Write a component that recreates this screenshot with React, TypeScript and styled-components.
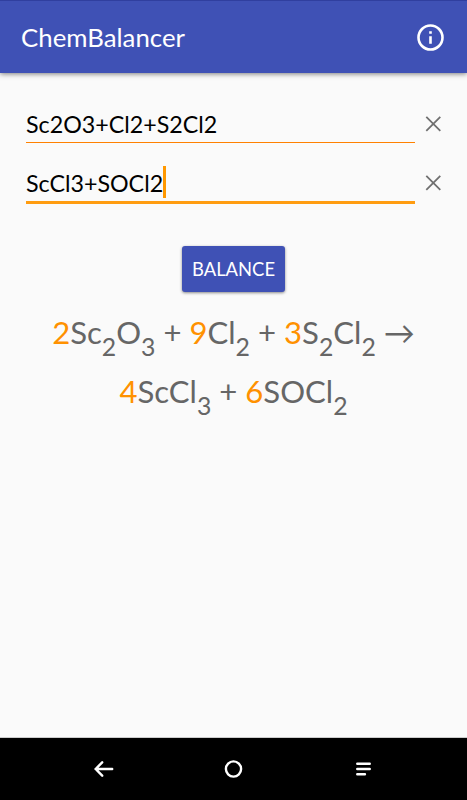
import React, { useState } from "react";
import styled, { createGlobalStyle } from "styled-components";

const GlobalStyle = createGlobalStyle`
  * { box-sizing: border-box; }
  body { margin: 0; background: #fafafa; font-family: Lato, sans-serif; }
`;

const Screen = styled.div`
  height: 800px;
  width: 467px;
  display: flex;
  flex-direction: column;
  background: #fafafa;
  overflow: hidden;
`;

const AppBar = styled.header`
  flex: none;
  height: 73px;
  padding: 2px 22px 0 21px;
  display: flex;
  align-items: center;
  justify-content: space-between;
  background: #3f51b5;
  border-top: 1px solid #303f9f;
  box-shadow: 0 1px 5px rgba(0, 0, 0, 0.5);
`;

const Title = styled.h1`
  margin: 0 0 2px;
  color: #fff;
  font-size: 25.8px;
  line-height: 32px;
  font-weight: 400;
`;

const IconButton = styled.button`
  display: flex;
  padding: 0;
  border: 0;
  background: none;
`;

const Content = styled.main`
  flex: 1;
  display: flex;
  flex-direction: column;
  align-items: center;
  padding-top: 32px;
`;

const Field = styled.div`
  width: 100%;
  height: 59px;
  padding: 0 24px 0 26px;
  display: flex;
  align-items: flex-start;
  justify-content: space-between;
`;

const FieldText = styled.div<{ $active?: boolean }>`
  width: 389px;
  height: ${(p) => (p.$active ? 40 : 38)}px;
  display: flex;
  align-items: flex-end;
  padding-bottom: 2px;
  border-bottom: ${(p) => (p.$active ? "3px solid #ff9c10" : "1px solid #ff8100")};
  color: #000;
  font-size: 23.25px;
  line-height: 32px;
`;

const Caret = styled.span`
  width: 2.5px;
  height: 32px;
  margin-bottom: 1px;
  background: #ff9800;
`;

const ClearButton = styled(IconButton)`
  margin-top: 9px;
`;

const BalanceButton = styled.button`
  width: 103px;
  height: 46px;
  margin: 23px 0 1px;
  padding: 0;
  border: 0;
  border-radius: 3px;
  background: #3f51b5;
  color: #fff;
  font: 400 18.4px Lato, sans-serif;
  box-shadow: 0 1px 3px rgba(0, 0, 0, 0.45);
`;

const Equation = styled.div`
  margin-top: 10px;
  color: #666;
  font-size: 31.1px;
  line-height: 58.5px;
  text-align: center;
  white-space: nowrap;
`;

const Coefficient = styled.span`
  color: #ff9100;
`;

const Sub = styled.sub`
  position: relative;
  top: 12px;
  vertical-align: baseline;
  font-size: 24.8px;
  line-height: 0;
`;

const NavBar = styled.nav`
  flex: none;
  height: 62px;
  display: flex;
  align-items: center;
  justify-content: center;
  gap: 106px;
  padding-right: 1px;
  background: #000;
  box-shadow: 0 -1px 0 #ccc;
`;

function Compound({ count, formula }: { count: number; formula: string }) {
  return (
    <>
      <Coefficient>{count}</Coefficient>
      {formula.split(/(\d+)/).filter(Boolean).map((part, i) =>
        /\d/.test(part) ? <Sub key={i}>{part}</Sub> : part
      )}
    </>
  );
}

function ClearIcon() {
  return (
    <svg width="20" height="20" viewBox="0 0 20 20" stroke="#707070" strokeWidth="1.8">
      <path d="M3.3 2.8L17.3 16.8M17.3 2.8L3.3 16.8" />
    </svg>
  );
}

export default function App() {
  const [left, setLeft] = useState("Sc2O3+Cl2+S2Cl2");
  const [right, setRight] = useState("ScCl3+SOCl2");
  return (
    <Screen>
      <GlobalStyle />
      <AppBar>
        <Title>ChemBalancer</Title>
        <IconButton aria-label="About">
          <svg width="29" height="28" viewBox="0 0 29 28" fill="none" stroke="#fff">
            <circle cx="14.5" cy="13.5" r="12" strokeWidth="2.6" />
            <path d="M14.5 12.2V19.8M14.5 7.2V9.8" strokeWidth="2.6" />
          </svg>
        </IconButton>
      </AppBar>
      <Content>
        <Field>
          <FieldText>{left}</FieldText>
          <ClearButton aria-label="Clear reactants" onClick={() => setLeft("")}><ClearIcon /></ClearButton>
        </Field>
        <Field>
          <FieldText $active>{right}<Caret /></FieldText>
          <ClearButton aria-label="Clear products" onClick={() => setRight("")}><ClearIcon /></ClearButton>
        </Field>
        <BalanceButton>BALANCE</BalanceButton>
        <Equation>
          <Compound count={2} formula="Sc2O3" /> + <Compound count={9} formula="Cl2" /> + <Compound count={3} formula="S2Cl2" /> →
          <br />
          <Compound count={4} formula="ScCl3" /> + <Compound count={6} formula="SOCl2" />
        </Equation>
      </Content>
      <NavBar>
        <IconButton aria-label="Back">
          <svg width="24" height="24" viewBox="0 0 24 24" fill="none" stroke="#fff" strokeWidth="2.4" strokeLinecap="round">
            <path d="M4.7 12H21.2M11.2 5.3L4.7 12L11.2 18.7" />
          </svg>
        </IconButton>
        <IconButton aria-label="Home">
          <svg width="24" height="24" viewBox="0 0 24 24" fill="none" stroke="#fff" strokeWidth="2.4">
            <circle cx="12.5" cy="12" r="7.6" />
          </svg>
        </IconButton>
        <IconButton aria-label="Recent apps">
          <svg width="24" height="24" viewBox="0 0 24 24" fill="none" stroke="#fff" strokeWidth="2.5" strokeLinecap="round">
            <path d="M6.3 6.8H18.7M6.3 12H18.7M6.3 17.2H13.9" />
          </svg>
        </IconButton>
      </NavBar>
    </Screen>
  );
}
